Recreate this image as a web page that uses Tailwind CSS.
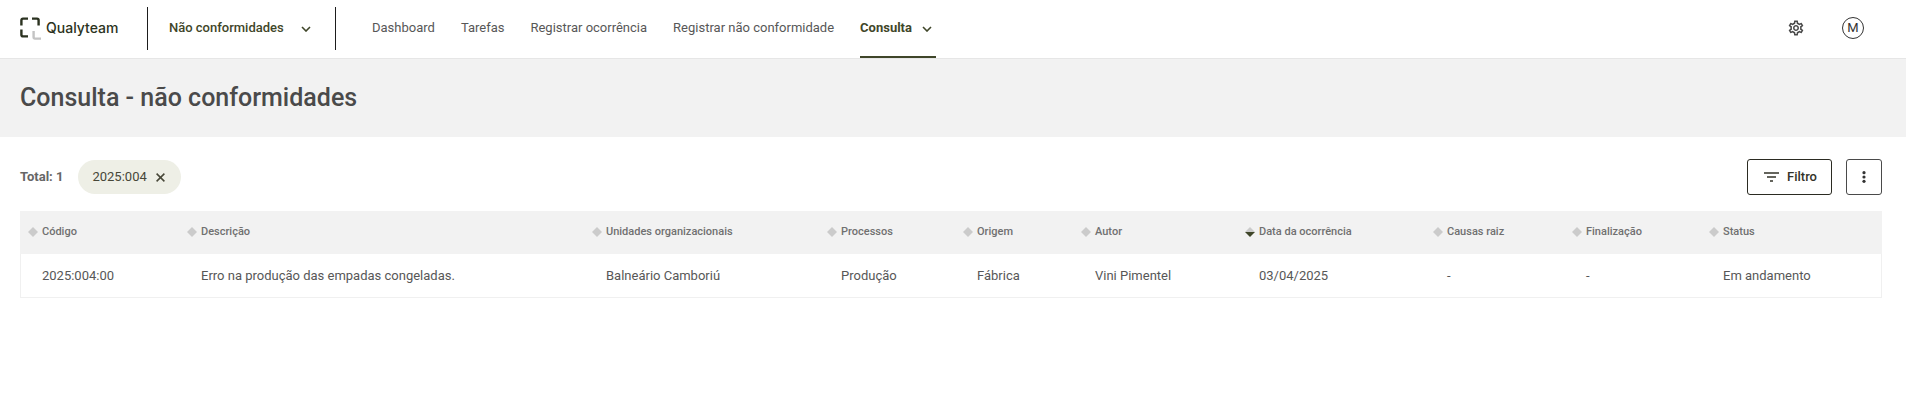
<!doctype html>
<html lang="pt-BR">
  <head>
    <meta charset="UTF-8" />
    <meta name="viewport" content="width=device-width, initial-scale=1" />
    <title>Consulta - não conformidades</title>
    <script src="https://cdn.jsdelivr.net/npm/@tailwindcss/browser@4"></script>
  </head>
  <body class="bg-white font-[Roboto,sans-serif] text-[13px] text-[#575757]">
    <header class="flex h-[59px] items-center border-b border-[#e6e6e6] pb-[2px] pl-5 pr-[42px]">
      <a href="#" class="flex w-[127px] items-center gap-1 text-[#2b3220]">
        <svg class="h-[23px] w-[22px]" viewBox="0 0 22 23" fill="none" stroke="currentColor" stroke-width="2.4">
          <path d="M1.4 8.5V3.2Q1.4 1.6 3 1.6H8M12 1.6H17Q18.6 1.6 18.6 3.2V8.5M1.4 12.5V17.8Q1.4 19.4 3 19.4H8" />
          <path d="M13.6 14V20Q13.6 21.6 15 21.6H21" stroke="#c4c4c4" />
        </svg>
        <span class="font-[Inter,sans-serif] text-sm font-medium">Qualyteam</span>
      </a>

      <!-- Module switcher -->
      <button type="button" class="flex h-[43px] w-[189px] items-center justify-between border-x border-[#1d1d1d] pl-[21px] pr-6 font-medium text-[#3f4629]">
        Não conformidades
        <svg class="mt-px h-[6px] w-[10px]" viewBox="0 0 10 6" fill="none" stroke="currentColor" stroke-width="1.6">
          <path d="M1 1l4 4 4-4" />
        </svg>
      </button>

      <nav class="-mb-[2px] ml-9 flex items-center gap-[26px] self-stretch pb-[2px]">
        <a href="#">Dashboard</a>
        <a href="#">Tarefas</a>
        <a href="#">Registrar ocorrência</a>
        <a href="#">Registrar não conformidade</a>
        <a href="#" class="-mb-[2px] flex items-center gap-[10px] self-stretch border-b-2 border-[#3f4629] pr-1 font-bold text-[#3f4629]">
          Consulta
          <svg class="mt-px h-[6px] w-[10px]" viewBox="0 0 10 6" fill="none" stroke="currentColor" stroke-width="1.6">
            <path d="M1 1l4 4 4-4" />
          </svg>
        </a>
      </nav>

      <div class="ml-auto flex items-center gap-[37px]">
        <button type="button" aria-label="Configurações" class="text-[#4a4a4a]">
          <svg class="h-[18px] w-[18px]" viewBox="0 0 24 24" fill="currentColor">
            <path d="M19.43 12.98c.04-.32.07-.64.07-.98 0-.34-.03-.66-.07-.98l2.11-1.65c.19-.15.24-.42.12-.64l-2-3.46c-.09-.16-.26-.25-.44-.25-.06 0-.12.01-.17.03l-2.49 1c-.52-.4-1.08-.73-1.69-.98l-.38-2.65C14.46 2.18 14.25 2 14 2h-4c-.25 0-.46.18-.49.42l-.38 2.65c-.61.25-1.17.59-1.69.98l-2.49-1c-.06-.02-.12-.03-.18-.03-.17 0-.34.09-.43.25l-2 3.46c-.13.22-.07.49.12.64l2.11 1.65c-.04.32-.07.65-.07.98 0 .33.03.66.07.98l-2.11 1.65c-.19.15-.24.42-.12.64l2 3.46c.09.16.26.25.44.25.06 0 .12-.01.17-.03l2.49-1c.52.4 1.08.73 1.69.98l.38 2.65c.03.24.24.42.49.42h4c.25 0 .46-.18.49-.42l.38-2.65c.61-.25 1.17-.59 1.69-.98l2.49 1c.06.02.12.03.18.03.17 0 .34-.09.43-.25l2-3.46c.12-.22.07-.49-.12-.64l-2.11-1.65zm-1.98-1.71c.04.31.05.52.05.73 0 .21-.02.43-.05.73l-.14 1.13.89.7 1.08.84-.7 1.21-1.27-.51-1.04-.42-.9.68c-.43.32-.84.56-1.25.73l-1.06.43-.16 1.13-.2 1.35h-1.4l-.19-1.35-.16-1.13-1.06-.43c-.43-.18-.83-.41-1.23-.71l-.91-.7-1.06.43-1.27.51-.7-1.21 1.08-.84.89-.7-.14-1.13c-.03-.31-.05-.54-.05-.74s.02-.43.05-.73l.14-1.13-.89-.7-1.08-.84.7-1.21 1.27.51 1.04.42.9-.68c.43-.32.84-.56 1.25-.73l1.06-.43.16-1.13.2-1.35h1.39l.19 1.35.16 1.13 1.06.43c.43.18.83.41 1.23.71l.91.7 1.06-.43 1.27-.51.7 1.21-1.07.85-.89.7.14 1.13zM12 8c-2.21 0-4 1.79-4 4s1.79 4 4 4 4-1.79 4-4-1.79-4-4-4zm0 6c-1.1 0-2-.9-2-2s.9-2 2-2 2 .9 2 2-.9 2-2 2z" />
          </svg>
        </button>
        <button type="button" class="flex h-[22px] w-[22px] items-center justify-center rounded-full border border-[#333] pb-px text-[#333]">M</button>
      </div>
    </header>

    <section class="flex h-[78px] items-center bg-[#f2f2f2] px-5">
      <h1 class="text-[25px] font-medium text-[#4a4a4a]">Consulta - não conformidades</h1>
    </section>

    <main class="pb-6 pl-5 pr-6 pt-[22px]">
      <div class="flex items-center">
        <span class="font-bold text-[#666]">Total: 1</span>
        <div class="ml-[15px] flex h-[34px] items-center gap-[9px] rounded-full bg-[#eeefe6] pl-[14px] pr-4 text-[#474738]">
          2025:004
          <button type="button" aria-label="Remover filtro">
            <svg class="h-[9px] w-[9px]" viewBox="0 0 9 9" fill="none" stroke="currentColor" stroke-width="1.5">
              <path d="M.6.6l7.8 7.8M8.4.6L.6 8.4" />
            </svg>
          </button>
        </div>

        <button type="button" class="ml-auto flex h-9 items-center gap-2 rounded-[3px] border border-[#2b2b22] pl-4 pr-[14px] font-medium text-[#333328]">
          <svg class="h-[10px] w-[15px]" viewBox="0 0 15 10" fill="none" stroke="currentColor" stroke-width="1.5">
            <path d="M0 1h15M3 5h9M6 9h3" />
          </svg>
          Filtro
        </button>
        <button type="button" aria-label="Mais opções" class="ml-[14px] flex h-9 w-9 items-center justify-center rounded-[3px] border border-[#4a4a4a] text-[#333]">
          <svg class="h-3 w-1" viewBox="0 0 4 12" fill="currentColor">
            <circle cx="2" cy="1.7" r="1.6" />
            <circle cx="2" cy="6" r="1.6" />
            <circle cx="2" cy="10.3" r="1.6" />
          </svg>
        </button>
      </div>

      <table class="mt-4 w-full table-fixed border-separate border-spacing-0 text-left">
        <colgroup>
          <col class="w-[159px]" />
          <col />
          <col class="w-[235px]" />
          <col class="w-[136px]" />
          <col class="w-[118px]" />
          <col class="w-[164px]" />
          <col class="w-[188px]" />
          <col class="w-[139px]" />
          <col class="w-[137px]" />
          <col class="w-[181px]" />
        </colgroup>
        <thead>
          <tr id="columns" class="h-[43px] bg-[#f2f2f2] text-[11px] text-[#707070]"></tr>
        </thead>
        <tbody>
          <tr id="row" class="h-11"></tr>
        </tbody>
      </table>
    </main>

    <script>
      const columns = [
        { title: "Código", value: "2025:004:00" },
        { title: "Descrição", value: "Erro na produção das empadas congeladas." },
        { title: "Unidades organizacionais", value: "Balneário Camboriú" },
        { title: "Processos", value: "Produção" },
        { title: "Origem", value: "Fábrica" },
        { title: "Autor", value: "Vini Pimentel" },
        { title: "Data da ocorrência", value: "03/04/2025", sorted: true },
        { title: "Causas raiz", value: "-" },
        { title: "Finalização", value: "-" },
        { title: "Status", value: "Em andamento" },
      ];

      document.getElementById("columns").innerHTML = columns
        .map(
          (column) => `
            <th class="p-0 pl-2 font-medium">
              <button type="button" class="flex items-center gap-1 whitespace-nowrap">
                <svg class="mb-px h-[10px] w-[10px]" viewBox="0 0 10 10">
                  <path d="M0 5L5 0l5 5z" fill="#cbcbcb" />
                  <path d="M0 5l5 5 5-5z" fill="${column.sorted ? "#3f4629" : "#cbcbcb"}" />
                </svg>
                ${column.title}
              </button>
            </th>`,
        )
        .join("");

      document.getElementById("row").innerHTML = columns
        .map(
          (column) =>
            `<td class="truncate border-b border-[#f0f0f0] p-0 pl-[22px] first:border-l first:pl-[21px] last:border-r">${column.value}</td>`,
        )
        .join("");
    </script>
  </body>
</html>
